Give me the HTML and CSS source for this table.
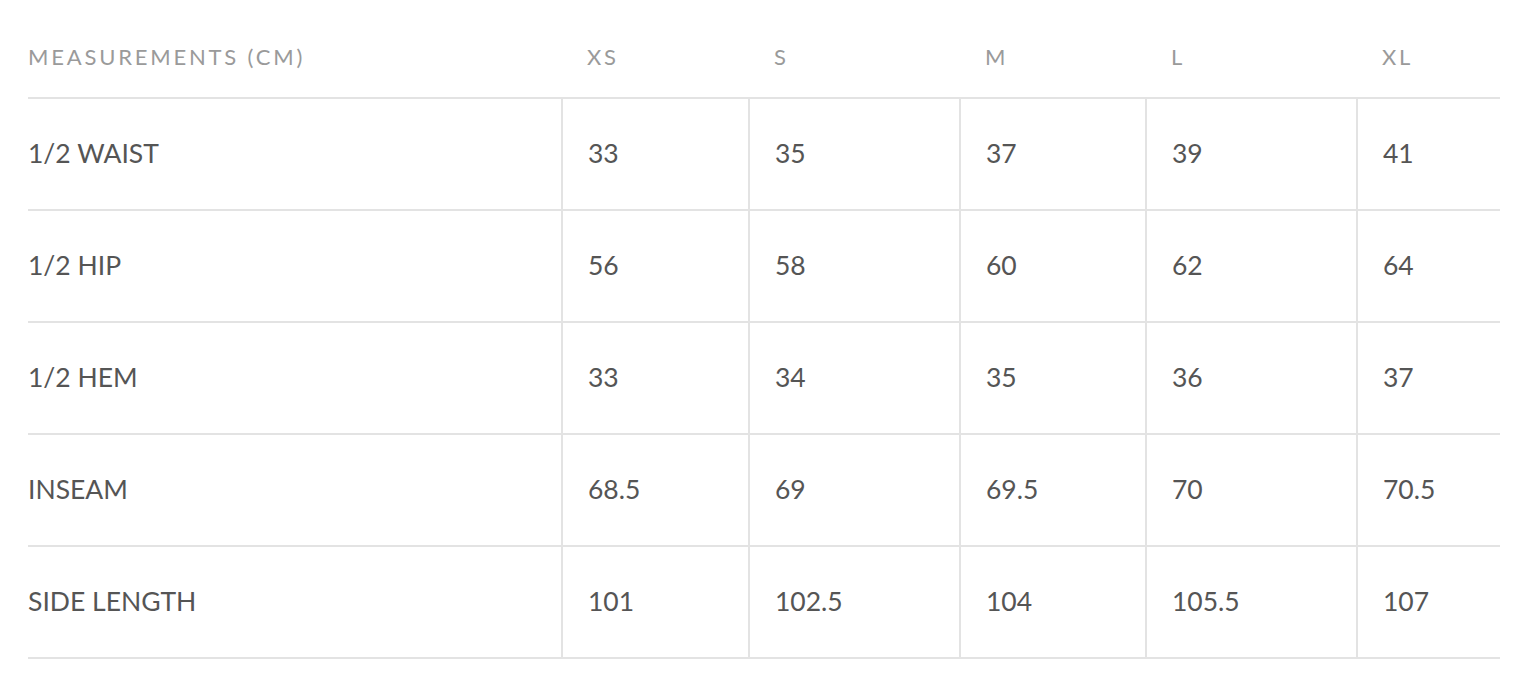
FILE: index.html
```html
<!DOCTYPE html>
<html>
<head>
<meta charset="utf-8">
<link rel="stylesheet" href="styles.css">
</head>
<body>
<div class="wrap">
<table class="size-table">
  <colgroup>
    <col class="c1"><col class="c2"><col class="c3"><col class="c4"><col class="c5"><col class="c6">
  </colgroup>
  <thead>
    <tr><th>MEASUREMENTS (CM)</th><th>XS</th><th>S</th><th>M</th><th>L</th><th>XL</th></tr>
  </thead>
  <tbody>
    <tr><td>1/2 WAIST</td><td>33</td><td>35</td><td>37</td><td>39</td><td>41</td></tr>
    <tr><td>1/2 HIP</td><td>56</td><td>58</td><td>60</td><td>62</td><td>64</td></tr>
    <tr><td>1/2 HEM</td><td>33</td><td>34</td><td>35</td><td>36</td><td>37</td></tr>
    <tr><td>INSEAM</td><td>68.5</td><td>69</td><td>69.5</td><td>70</td><td>70.5</td></tr>
    <tr><td>SIDE LENGTH</td><td>101</td><td>102.5</td><td>104</td><td>105.5</td><td>107</td></tr>
  </tbody>
</table>
</div>
</body>
</html>
```
FILE: styles.css
```css
html, body {
  margin: 0;
  padding: 0;
  background: #fff;
}
.wrap {
  padding: 16px 14px 0 28px;
}
.size-table {
  width: 1472px;
  border-collapse: collapse;
  table-layout: fixed;
  font-family: "Lato", "Liberation Sans", sans-serif;
}
.c1 { width: 534px; }
.c2 { width: 187px; }
.c3 { width: 211px; }
.c4 { width: 186px; }
.c5 { width: 211px; }
.c6 { width: 143px; }
.size-table th {
  height: 81px;
  padding: 0 0 0 25px;
  text-align: left;
  font-weight: 400;
  font-size: 22px;
  letter-spacing: 2.8px;
  color: #9a9a9a;
  border-bottom: 2px solid #e3e3e3;
  vertical-align: middle;
}
.size-table td {
  height: 108px;
  padding: 0 0 2px 25px;
  font-size: 26.5px;
  color: #555;
  border-bottom: 2px solid #e3e3e3;
  border-left: 2px solid #e3e3e3;
  vertical-align: middle;
}
.size-table th:first-child,
.size-table td:first-child {
  padding-left: 0;
  border-left: none;
}
```
